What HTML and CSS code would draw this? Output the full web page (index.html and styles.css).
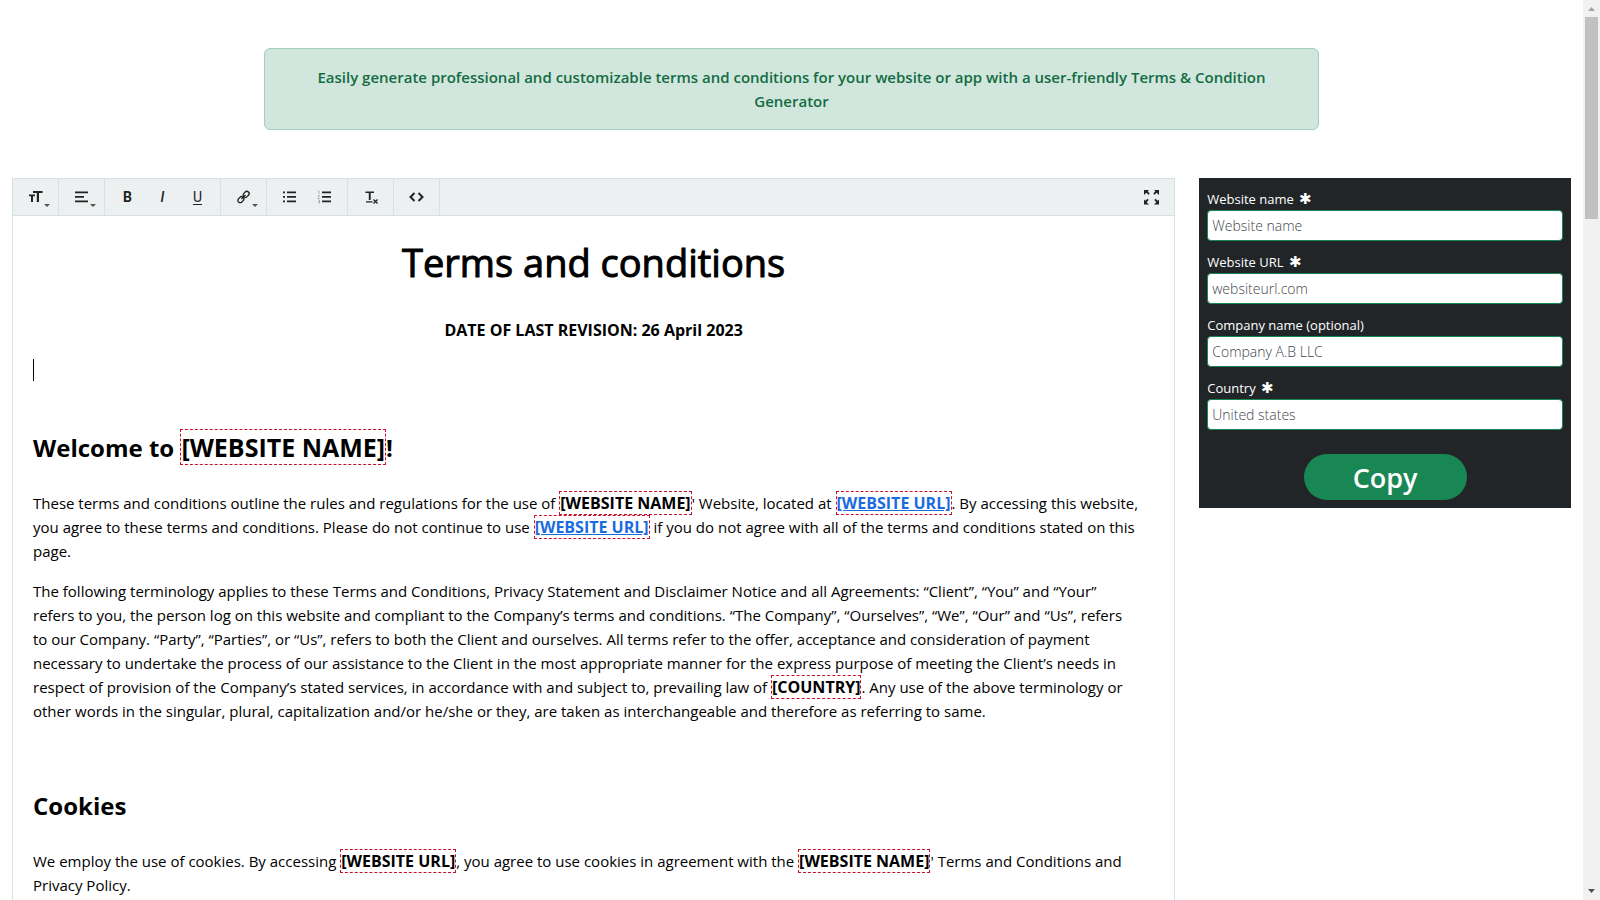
FILE: index.html
```html
<!DOCTYPE html>
<html lang="en">
<head>
<meta charset="utf-8">
<title>Terms and Conditions Generator</title>
<link rel="stylesheet" href="styles.css">
</head>
<body>
<div class="window">
  <div class="page">
    <div class="alert" role="alert">Easily generate professional and customizable terms and conditions for your website or app with a user-friendly Terms &amp; Condition Generator</div>
    <div class="columns">
      <main class="editor">
        <div class="toolbar" role="toolbar" aria-label="Formatting">
          <div class="group">
            <button class="tool drop" type="button" aria-label="Font size"><svg width="17" height="17" viewBox="0 0 17 17"><path d="M6 2h9.500v2H12V13H9.800V4H6zM2 5.500h6v1.800H6V13H4V7.300H2z"/></svg></button>
          </div>
          <div class="group">
            <button class="tool drop" type="button" aria-label="Align"><svg width="17" height="17" viewBox="0 0 17 17"><path d="M2 2.500h13v1.700H2zM2 7h9v1.700H2zM2 11.500h13v1.700H2z"/></svg></button>
          </div>
          <div class="group">
            <button class="tool bold" type="button">B</button>
            <button class="tool italic" type="button">I</button>
            <button class="tool under" type="button">U</button>
          </div>
          <div class="group">
            <button class="tool drop" type="button" aria-label="Link"><svg width="17" height="17" viewBox="0 0 17 17"><g fill="none" stroke="currentColor" stroke-width="1.300" transform="rotate(-45 8.500 8)"><rect x="1.500" y="5.700" width="6.500" height="4.600" rx="2.300"/><rect x="9" y="5.700" width="6.500" height="4.600" rx="2.300"/><path d="M5.500 8h6"/></g></svg></button>
          </div>
          <div class="group">
            <button class="tool" type="button" aria-label="Bulleted list"><svg width="17" height="17" viewBox="0 0 17 17"><path d="M2 2.500h2v1.800H2zM2 7h2v1.800H2zM2 11.500h2v1.800H2zM6 2.500h9v1.800H6zM6 7h9v1.800H6zM6 11.500h9v1.800H6z"/></svg></button>
            <button class="tool" type="button" aria-label="Numbered list"><svg width="17" height="17" viewBox="0 0 17 17"><path d="M6 2.500h9v1.800H6zM6 7h9v1.800H6zM6 11.500h9v1.800H6z"/><path d="M2 2h1v3M2 6.500h1.500L2 9.500h1.500M2 11h1.500v3H2M2.500 12.500h1" fill="none" stroke="currentColor" stroke-width=".4" opacity=".7"/></svg></button>
          </div>
          <div class="group">
            <button class="tool" type="button" aria-label="Remove format"><svg width="17" height="17" viewBox="0 0 17 17"><path d="M3.500 2.500h8.500v1.600H8.700V11H6.800V4.100H3.500zM4 12.200h6.500v1.200H4z"/><path d="M11.500 10.500l4 4M15.500 10.500l-4 4" fill="none" stroke="currentColor" stroke-width="1.300"/></svg></button>
          </div>
          <div class="group">
            <button class="tool" type="button" aria-label="View HTML"><svg width="17" height="17" viewBox="0 0 17 17"><path d="M6.500 4l-4 4 4 4M10.500 4l4 4-4 4" fill="none" stroke="currentColor" stroke-width="2"/></svg></button>
          </div>
          <button class="tool full" type="button" aria-label="Fullscreen"><svg width="17" height="17" viewBox="0 0 17 17"><path d="M1 1h5L4.700 2.300l2 2.200-1.200 1.200-2.200-2L1 6zM16 1v5l-2.300-2.300-2.200 2-1.200-1.200 2-2.200L11 1zM1 15.500v-5l1.300 1.300 2.200-2 1.200 1.200-2 2.200L6 15.500zM16 15.500h-5l2.300-2.300-2-2.200 1.200-1.200 2.200 2 1.300-1.300z"/></svg></button>
        </div>
        <article class="doc">
          <h1>Terms and conditions</h1>
          <p class="revision">DATE OF LAST REVISION: 26 April 2023</p>
          <p class="empty"><span class="cursor"></span></p>
          <h2>Welcome to <span class="var">[WEBSITE NAME]</span>!</h2>
          <p>These terms and conditions outline the rules and regulations for the use of <b class="var">[WEBSITE NAME]</b>' Website, located at <a class="var" href="#">[WEBSITE URL]</a>. By accessing this website,<br>you agree to these terms and conditions. Please do not continue to use <a class="var" href="#">[WEBSITE URL]</a> if you do not agree with all of the terms and conditions stated on this<br>page.</p>
          <p>The following terminology applies to these Terms and Conditions, Privacy Statement and Disclaimer Notice and all Agreements: “Client”, “You” and “Your”<br>refers to you, the person log on this website and compliant to the Company’s terms and conditions. “The Company”, “Ourselves”, “We”, “Our” and “Us”, refers<br>to our Company. “Party”, “Parties”, or “Us”, refers to both the Client and ourselves. All terms refer to the offer, acceptance and consideration of payment<br>necessary to undertake the process of our assistance to the Client in the most appropriate manner for the express purpose of meeting the Client’s needs in<br>respect of provision of the Company’s stated services, in accordance with and subject to, prevailing law of <b class="var">[COUNTRY]</b>. Any use of the above terminology or<br>other words in the singular, plural, capitalization and/or he/she or they, are taken as interchangeable and therefore as referring to same.</p>
          <h2 class="section">Cookies</h2>
          <p>We employ the use of cookies. By accessing <b class="var">[WEBSITE URL]</b>, you agree to use cookies in agreement with the <b class="var">[WEBSITE NAME]</b>' Terms and Conditions and<br>Privacy Policy.</p>
        </article>
      </main>
      <form class="panel">
        <label for="site">Website name <span class="star">✱</span></label>
        <input id="site" type="text" placeholder="Website name">
        <label for="url">Website URL <span class="star">✱</span></label>
        <input id="url" type="text" placeholder="websiteurl.com">
        <label for="company">Company name (optional)</label>
        <input id="company" type="text" placeholder="Company A.B LLC">
        <label for="country">Country <span class="star">✱</span></label>
        <input id="country" type="text" placeholder="United states">
        <button class="copy" type="button">Copy</button>
      </form>
    </div>
  </div>
  <div class="scrollbar">
    <svg width="17" height="17" viewBox="0 0 17 17"><path d="M5 11l3.500-4 3.500 4z" fill="#a3a3a3"/></svg>
    <div class="thumb"></div>
    <svg class="down" width="17" height="17" viewBox="0 0 17 17"><path d="M5 6h7l-3.500 4z" fill="#505050"/></svg>
  </div>
</div>
</body>
</html>
```
FILE: styles.css
```css
* { box-sizing: border-box; }
body {
  margin: 0;
  background: #fff;
  color: #000;
  font: 400 15px/24px "Open Sans", "Noto Sans", sans-serif;
}
.window {
  display: grid;
  grid-template-columns: 1fr 17px;
  height: 100vh;
  overflow: hidden;
}
.page { min-width: 0; min-height: 0; overflow: hidden; }
.alert {
  width: 66.66%;
  margin: 48px auto;
  padding: 16px 48px;
  border: 1px solid #a3cfbb;
  border-radius: 6px;
  background: #d1e7dd;
  color: #146c43;
  font-weight: 600;
  text-align: center;
}
.columns {
  display: grid;
  grid-template-columns: 3fr 1fr;
  align-items: start;
}
.editor {
  min-width: 0;
  margin: 0 12px;
  border: 1px solid #d7e0e2;
}
.toolbar {
  display: flex;
  height: 37px;
  background: #ecf0f1;
  border-bottom: 1px solid #d7e0e2;
}
.group {
  display: flex;
  padding: 0 5px;
  border-right: 1px solid #d7e0e2;
}
.tool {
  position: relative;
  display: flex;
  align-items: center;
  justify-content: center;
  width: 35px;
  height: 36px;
  padding: 0;
  border: 0;
  background: none;
  color: #222;
  font: 500 14px/16px Roboto, sans-serif;
}
.tool svg { fill: currentColor; }
.bold { font-weight: 700; }
.italic { font-style: italic; }
.under { text-decoration: underline 1px; text-underline-offset: 2px; font-weight: 400; }
.drop::after {
  content: "";
  position: absolute;
  right: 3px;
  bottom: 8px;
  border: 3px solid transparent;
  border-top-color: #555;
  border-bottom: 0;
}
.full { margin-left: auto; margin-right: 5px; }
.doc { padding: 22px 20px; }
h1, h2, p { margin: 0 0 16px; }
h1 {
  margin-bottom: 32px;
  font-size: 38px;
  line-height: 48px;
  font-weight: 500;
  text-align: center;
  -webkit-text-stroke: 1px #000;
}
.revision { font-size: 16px; font-weight: 700; text-align: center; }
.empty { display: flex; align-items: center; height: 24px; margin-bottom: 50px; }
.cursor { width: 1px; height: 22px; background: #000; }
h2 { margin-bottom: 27px; font-size: 24px; line-height: 32px; font-weight: 700; }
.section { margin-top: 67px; }
.var { border: 1px dashed #c8102e; font-size: 16px; font-weight: 700; line-height: 20px; }
h2 .var { font-size: 25px; }
a { color: #1a6be0; }
.panel {
  display: flex;
  flex-direction: column;
  min-width: 0;
  margin: 0 12px;
  padding: 8px;
  background: #212527;
  color: #fff;
}
.panel label { padding-top: 2px; font-size: 13px; line-height: 22px; }
.star { margin-left: 2px; font-size: 15px; line-height: 20px; }
.panel input {
  height: 31px;
  margin-bottom: 8px;
  padding: 4px;
  border: 1px solid #198754;
  border-radius: 4px;
  background: #fff;
  font: inherit;
  font-size: 14px;
  font-weight: 300;
}
.panel input::placeholder { color: #40464c; opacity: 1; }
.copy {
  align-self: center;
  width: 163px;
  height: 46px;
  margin-top: 16px;
  padding: 2px 0 0;
  border: 0;
  border-radius: 23px;
  background: #198754;
  color: #fff;
  font: 600 27px/44px "Open Sans", "Noto Sans", sans-serif;
}
.scrollbar {
  display: flex;
  flex-direction: column;
  align-items: center;
  background: #f1f1f1;
}
.thumb { width: 13px; height: 202px; background: #c1c1c1; }
.down { margin-top: auto; }
```
